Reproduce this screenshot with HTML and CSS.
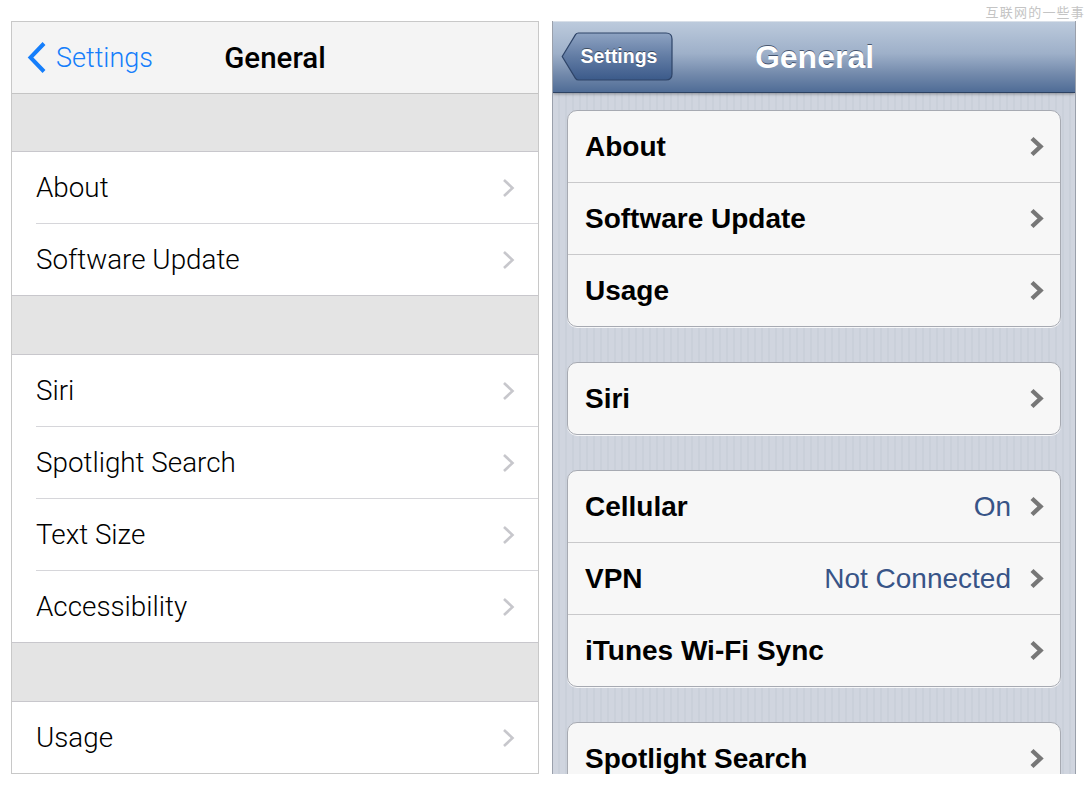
FILE: index.html
```html
<!DOCTYPE html>
<html lang="en">
<head>
  <meta charset="UTF-8">
  <title>General settings, iOS 7 vs iOS 6</title>
  <link rel="stylesheet" href="styles.css">
</head>
<body>
  <div class="page">
    <!-- Watermark -->
    <div class="topline">
      <span class="watermark">互联网的一些事</span>
    </div>

    <div class="shots">
      <!-- iOS 7 (flat) -->
      <div class="shot flat">
        <div class="flat-nav">
          <a class="flat-back">
            <svg width="20" height="33" viewBox="0 0 20 33"><polyline points="17,2.5 3.5,16.5 17,30.5" fill="none" stroke="#157efb" stroke-width="4"/></svg>
            <span>Settings</span>
          </a>
          <h1 class="flat-title">General</h1>
          <span></span>
        </div>

        <div class="flat-gap first"></div>
        <div class="flat-group">
          <div class="flat-row"><span>About</span><svg class="flat-chev" width="13" height="20" viewBox="0 0 13 20"><polyline points="2,2 10.5,10 2,18" fill="none" stroke="#c7c7cc" stroke-width="2.6"/></svg></div>
          <div class="flat-row"><span>Software Update</span><svg class="flat-chev" width="13" height="20" viewBox="0 0 13 20"><polyline points="2,2 10.5,10 2,18" fill="none" stroke="#c7c7cc" stroke-width="2.6"/></svg></div>
        </div>

        <div class="flat-gap"></div>
        <div class="flat-group">
          <div class="flat-row"><span>Siri</span><svg class="flat-chev" width="13" height="20" viewBox="0 0 13 20"><polyline points="2,2 10.5,10 2,18" fill="none" stroke="#c7c7cc" stroke-width="2.6"/></svg></div>
          <div class="flat-row"><span>Spotlight Search</span><svg class="flat-chev" width="13" height="20" viewBox="0 0 13 20"><polyline points="2,2 10.5,10 2,18" fill="none" stroke="#c7c7cc" stroke-width="2.6"/></svg></div>
          <div class="flat-row"><span>Text Size</span><svg class="flat-chev" width="13" height="20" viewBox="0 0 13 20"><polyline points="2,2 10.5,10 2,18" fill="none" stroke="#c7c7cc" stroke-width="2.6"/></svg></div>
          <div class="flat-row"><span>Accessibility</span><svg class="flat-chev" width="13" height="20" viewBox="0 0 13 20"><polyline points="2,2 10.5,10 2,18" fill="none" stroke="#c7c7cc" stroke-width="2.6"/></svg></div>
        </div>

        <div class="flat-gap"></div>
        <div class="flat-group">
          <div class="flat-row"><span>Usage</span><svg class="flat-chev" width="13" height="20" viewBox="0 0 13 20"><polyline points="2,2 10.5,10 2,18" fill="none" stroke="#c7c7cc" stroke-width="2.6"/></svg></div>
        </div>
      </div>

      <!-- iOS 6 (classic) -->
      <div class="shot classic">
        <div class="classic-nav">
          <a class="classic-back">
            <svg class="classic-back-bg" width="112" height="49" viewBox="0 0 112 49">
              <defs>
                <linearGradient id="backGrad" x1="0" y1="0" x2="0" y2="1">
                  <stop offset="0" stop-color="#8ea3c2"/>
                  <stop offset="0.5" stop-color="#627ca4"/>
                  <stop offset="1" stop-color="#3b5a8a"/>
                </linearGradient>
              </defs>
              <path d="M1.2 24.5 L14.5 2.6 Q15.5 1 17.5 1 H105 Q111 1 111 7 V42 Q111 48 105 48 H17.5 Q15.5 48 14.5 46.4 Z" fill="url(#backGrad)" stroke="#2e4468" stroke-width="1.2"/>
            </svg>
            <span>Settings</span>
          </a>
          <h1 class="classic-title">General</h1>
        </div>

        <div class="classic-body">
          <div class="card">
            <div class="card-row"><span class="label">About</span><svg class="chev" width="15" height="21" viewBox="0 0 15 21"><polyline points="3,2.5 11.5,10.5 3,18.5" fill="none" stroke="#777" stroke-width="4.4"/></svg></div>
            <div class="card-row"><span class="label">Software Update</span><svg class="chev" width="15" height="21" viewBox="0 0 15 21"><polyline points="3,2.5 11.5,10.5 3,18.5" fill="none" stroke="#777" stroke-width="4.4"/></svg></div>
            <div class="card-row"><span class="label">Usage</span><svg class="chev" width="15" height="21" viewBox="0 0 15 21"><polyline points="3,2.5 11.5,10.5 3,18.5" fill="none" stroke="#777" stroke-width="4.4"/></svg></div>
          </div>

          <div class="card">
            <div class="card-row"><span class="label">Siri</span><svg class="chev" width="15" height="21" viewBox="0 0 15 21"><polyline points="3,2.5 11.5,10.5 3,18.5" fill="none" stroke="#777" stroke-width="4.4"/></svg></div>
          </div>

          <div class="card">
            <div class="card-row"><span class="label">Cellular</span><span class="value">On</span><svg class="chev" width="15" height="21" viewBox="0 0 15 21"><polyline points="3,2.5 11.5,10.5 3,18.5" fill="none" stroke="#777" stroke-width="4.4"/></svg></div>
            <div class="card-row"><span class="label">VPN</span><span class="value">Not Connected</span><svg class="chev" width="15" height="21" viewBox="0 0 15 21"><polyline points="3,2.5 11.5,10.5 3,18.5" fill="none" stroke="#777" stroke-width="4.4"/></svg></div>
            <div class="card-row"><span class="label">iTunes Wi-Fi Sync</span><svg class="chev" width="15" height="21" viewBox="0 0 15 21"><polyline points="3,2.5 11.5,10.5 3,18.5" fill="none" stroke="#777" stroke-width="4.4"/></svg></div>
          </div>

          <div class="card">
            <div class="card-row"><span class="label">Spotlight Search</span><svg class="chev" width="15" height="21" viewBox="0 0 15 21"><polyline points="3,2.5 11.5,10.5 3,18.5" fill="none" stroke="#777" stroke-width="4.4"/></svg></div>
          </div>
        </div>
      </div>
    </div>
  </div>
</body>
</html>
```

FILE: styles.css
```css
body {
  margin: 0;
  padding: 0;
  background: #fff;
  font-family: 'Liberation Sans', Arial, sans-serif;
}
.page {
  padding: 0 7px 0 11px;
}
.topline {
  height: 21px;
  text-align: right;
  line-height: 24px;
}
.watermark {
  font-family: 'Noto Sans CJK SC', sans-serif;
  font-size: 13px;
  letter-spacing: 1.2px;
  color: #c4c4c4;
}
.shots {
  display: flex;
  gap: 13px;
}
.shot {
  height: 753px;
  overflow: hidden;
  box-sizing: border-box;
}

/* iOS 7 */
.flat {
  width: 528px;
  border: 1px solid #c8c8c8;
  background: #e4e4e4;
  font-family: Roboto, sans-serif;
  font-weight: 300;
}
.flat-nav {
  height: 71px;
  display: grid;
  grid-template-columns: 1fr auto 1fr;
  align-items: center;
  background: #f4f4f4;
  border-bottom: 1px solid #c4c4c4;
}
.flat-back {
  display: flex;
  align-items: center;
  gap: 9px;
  padding-left: 15px;
  color: #157efb;
  font-size: 27px;
}
.flat-back svg {
  display: block;
}
.flat-title {
  margin: 0;
  font-size: 29.5px;
  font-weight: 500;
  color: #000;
}
.flat-gap {
  height: 58px;
}
.flat-gap.first {
  height: 57px;
}
.flat-group {
  background: #fff;
  border-top: 1px solid #c8c7cc;
  border-bottom: 1px solid #c8c7cc;
}
.flat-row {
  height: 71px;
  display: flex;
  align-items: center;
  justify-content: space-between;
  padding: 0 23px 0 24px;
  font-size: 27.8px;
  color: #000;
}
.flat-row + .flat-row {
  border-top: 1px solid #d6d6da;
  margin-left: 24px;
  padding-left: 0;
}
.flat-chev {
  display: block;
}

/* iOS 6 */
.classic {
  width: 524px;
  border-left: 1px solid #9aa0ab;
  border-right: 1px solid #9aa0ab;
  background: repeating-linear-gradient(90deg, #d0d5df 0, #d0d5df 5px, #cad0da 5px, #cad0da 7px);
}
.classic-nav {
  position: relative;
  height: 70px;
  display: flex;
  align-items: center;
  justify-content: center;
  background: linear-gradient(to bottom, #bccadc 0%, #9eb0c9 45%, #7289ab 75%, #4f6c96 100%);
  border-top: 1px solid #d8dfe8;
  border-bottom: 1px solid #2d4262;
  box-shadow: 0 1px 3px rgba(0, 0, 0, 0.35);
}
.classic-back {
  position: absolute;
  left: 8px;
  top: 10px;
  width: 112px;
  height: 49px;
  display: flex;
  align-items: center;
  justify-content: center;
  padding-left: 4px;
  box-sizing: border-box;
  color: #fff;
  font-weight: bold;
  font-size: 19.5px;
  text-shadow: 0 -1px 0 rgba(0, 0, 0, 0.45);
}
.classic-back-bg {
  position: absolute;
  left: 0;
  top: 0;
}
.classic-back span {
  position: relative;
}
.classic-title {
  margin: 0;
  padding-left: 1px;
  font-size: 32px;
  font-weight: bold;
  color: #fff;
  text-shadow: 0 -1px 0 rgba(30, 45, 70, 0.7);
}
.classic-body {
  display: flex;
  flex-direction: column;
  gap: 35px;
  padding: 17px 14px 0 14px;
}
.card {
  background: #f7f7f7;
  border: 1px solid #a7aab2;
  border-radius: 10px;
  box-shadow: 0 1px 0 rgba(255, 255, 255, 0.8);
}
.card-row {
  height: 71px;
  display: flex;
  align-items: center;
  padding: 0 16px 0 17px;
  font-size: 28px;
}
.card-row + .card-row {
  border-top: 1px solid #c9c9cb;
}
.card-row .label {
  flex: 1;
  font-weight: bold;
  color: #000;
}
.card-row .value {
  color: #385487;
  margin-right: 18px;
}
.chev {
  display: block;
}
```
